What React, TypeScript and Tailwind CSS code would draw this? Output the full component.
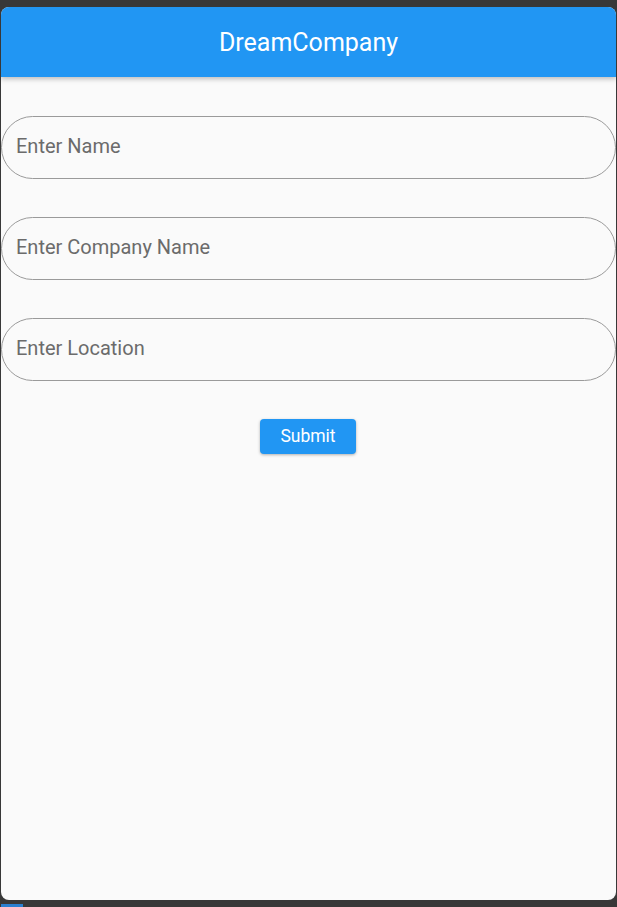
import React, { useState } from 'react';

const fields = ['Enter Name', 'Enter Company Name', 'Enter Location'];

const App: React.FC = () => {
  const [values, setValues] = useState<string[]>(['', '', '']);

  return (
    <div className="w-[617px] h-[907px] bg-[#383838] flex flex-col pt-[7px] pl-[1px] pr-[1px] overflow-hidden font-['Roboto',sans-serif]">
      {/* Window */}
      <div className="w-[615px] h-[893px] bg-[#fafafa] rounded-[8px] overflow-hidden flex flex-col">
        {/* App bar */}
        <div className="h-[70px] shrink-0 bg-[#2196f3] flex items-center justify-center shadow-[0_2px_5px_rgba(0,0,0,0.25)] relative z-10">
          <h1 className="text-white text-[25px] leading-none">DreamCompany</h1>
        </div>

        {/* Form */}
        <div className="flex flex-col pt-[39px] gap-[38px]">
          {fields.map((label, i) => (
            <input
              key={label}
              value={values[i]}
              onChange={e => setValues(v => v.map((x, j) => (j === i ? e.target.value : x)))}
              placeholder={label}
              className="w-full h-[63px] rounded-full border border-[#9a9a9a] bg-transparent px-[14px] pb-[3px] text-[20px] text-[#333] placeholder:text-[#6b6b6b] outline-none"
            />
          ))}
        </div>

        <div className="flex justify-center pt-[38px] pr-[1px]">
          <button className="w-[96px] h-[35px] rounded-[4px] bg-[#2196f3] text-white text-[17.5px] shadow-[0_1px_3px_rgba(0,0,0,0.3)]">
            Submit
          </button>
        </div>
      </div>

      {/* Taskbar strip */}
      <div className="flex-1 flex items-end">
        <div className="w-[22px] h-[3px] bg-[#2a7fd0]" />
      </div>
    </div>
  );
};

export default App;
